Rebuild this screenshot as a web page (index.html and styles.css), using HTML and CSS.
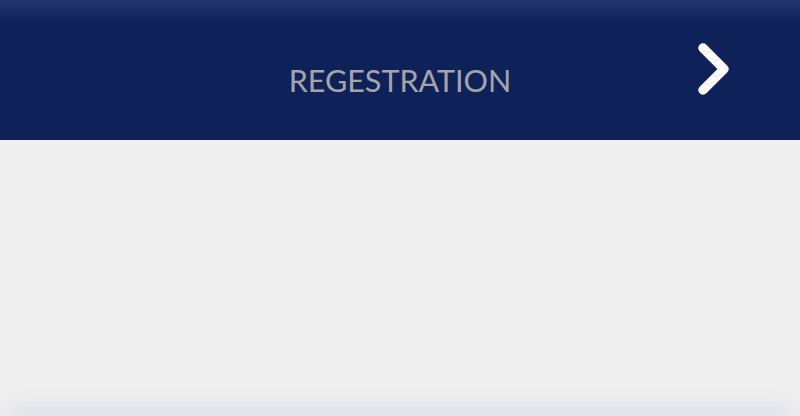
FILE: index.html
```html
<!DOCTYPE html>
<html>
<head>
<meta charset="utf-8">
<link rel="stylesheet" href="styles.css">
</head>
<body>
<header class="topbar">
  <div class="title">REGESTRATION</div>
  <button class="next" aria-label="Next">
    <svg width="40" height="60" viewBox="0 0 40 60"><path d="M9 9 L30 30 L9 51" fill="none" stroke="#ffffff" stroke-width="9.5" stroke-linecap="round" stroke-linejoin="round"/></svg>
  </button>
</header>
<main class="content"></main>
<footer class="card"></footer>
</body>
</html>
```
FILE: styles.css
```css
html, body {
  margin: 0;
  padding: 0;
}
body {
  background: #efefef;
  font-family: Lato, "Open Sans", sans-serif;
  overflow: hidden;
  height: 416px;
}
.topbar {
  height: 140px;
  background-color: #0e2259;
  background-image: linear-gradient(to bottom, rgba(80, 95, 150, 0.3), rgba(80, 95, 150, 0) 24px);
  display: flex;
  align-items: center;
  justify-content: center;
  position: relative;
}
.title {
  color: #a4a5aa;
  font-size: 30.5px;
  font-weight: 400;
  letter-spacing: 0;
  padding-top: 20px;
}
.next {
  position: absolute;
  right: 66px;
  top: 39px;
  background: none;
  border: 0;
  padding: 0;
  display: block;
}
.next svg {
  display: block;
}
.content {
  height: 276px;
}
.card {
  height: 0;
  margin: 0 18px;
  box-shadow: 0 0 20px 8px rgba(70, 85, 200, 0.12);
}
```
